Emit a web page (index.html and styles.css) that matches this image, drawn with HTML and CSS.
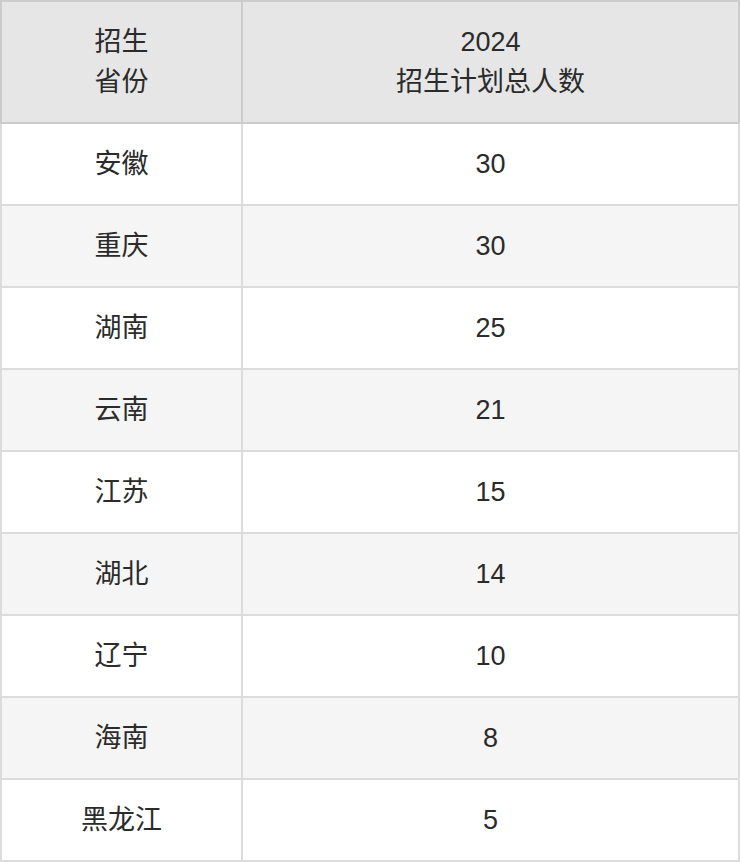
FILE: index.html
```html
<!DOCTYPE html>
<html lang="zh">
<head>
<meta charset="utf-8">
<link rel="stylesheet" href="styles.css">
</head>
<body>
<table class="plan">
  <thead>
    <tr><th class="c1">招生<br>省份</th><th class="c2">2024<br>招生计划总人数</th></tr>
  </thead>
  <tbody>
    <tr><td>安徽</td><td>30</td></tr>
    <tr><td>重庆</td><td>30</td></tr>
    <tr><td>湖南</td><td>25</td></tr>
    <tr><td>云南</td><td>21</td></tr>
    <tr><td>江苏</td><td>15</td></tr>
    <tr><td>湖北</td><td>14</td></tr>
    <tr><td>辽宁</td><td>10</td></tr>
    <tr><td>海南</td><td>8</td></tr>
    <tr><td>黑龙江</td><td>5</td></tr>
  </tbody>
</table>
</body>
</html>
```
FILE: styles.css
```css
html, body { margin: 0; padding: 0; background: #fff; }
.plan {
  border-collapse: collapse;
  width: 740px;
  table-layout: fixed;
  font-family: "Helvetica Neue", "Liberation Sans", "Noto Sans CJK SC", sans-serif;
  font-size: 27px;
  color: #2b2b2b;
}
.plan th, .plan td {
  border: 2px solid #dcdcdc;
  text-align: center;
  padding: 0;
  font-weight: normal;
}
.plan th {
  background: #e6e6e6;
  border-color: #cccccc;
  height: 120px;
  line-height: 40px;
}
.plan .c1 { width: 239px; }
.plan td { height: 80px; line-height: 30px; }
.plan tbody tr:nth-child(even) td { background: #f5f5f5; }
```
